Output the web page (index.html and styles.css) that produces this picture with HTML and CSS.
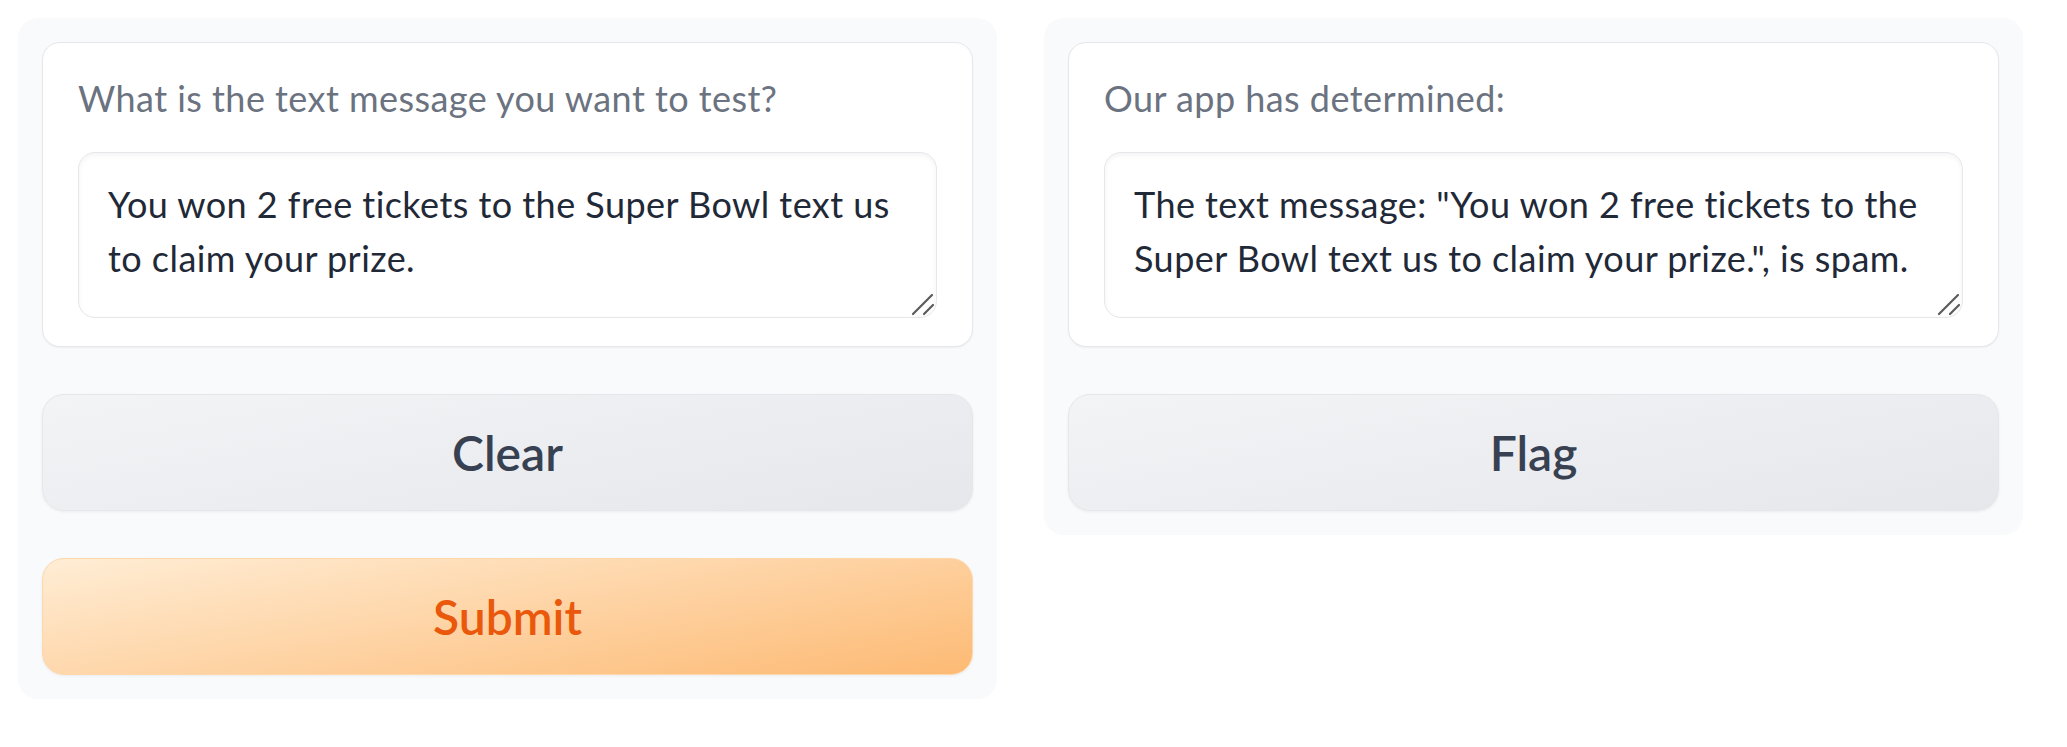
FILE: index.html
```html
<!DOCTYPE html>
<html lang="en">
<head>
<meta charset="utf-8">
<title>Spam detector</title>
<link rel="stylesheet" href="styles.css">
</head>
<body>
<div class="app">
  <div class="panel">
    <div class="card">
      <label class="label" for="msg">What is the text message you want to test?</label>
      <div class="field-wrap">
        <textarea id="msg" class="field">You won 2 free tickets to the Super Bowl text us to claim your prize.</textarea>
        <svg class="grip" width="26" height="26" viewBox="0 0 26 26" aria-hidden="true"><path d="M2 22L21 3M13 22L22 13" stroke="#5b5b5b" stroke-width="2.2" stroke-linecap="round" fill="none"/></svg>
      </div>
    </div>
    <button class="btn btn-secondary">Clear</button>
    <button class="btn btn-primary">Submit</button>
  </div>
  <div class="panel">
    <div class="card">
      <label class="label" for="out">Our app has determined:</label>
      <div class="field-wrap">
        <textarea id="out" class="field" readonly>The text message: "You won 2 free tickets to the Super Bowl text us to claim your prize.", is spam.</textarea>
        <svg class="grip" width="26" height="26" viewBox="0 0 26 26" aria-hidden="true"><path d="M2 22L21 3M13 22L22 13" stroke="#5b5b5b" stroke-width="2.2" stroke-linecap="round" fill="none"/></svg>
      </div>
    </div>
    <button class="btn btn-secondary">Flag</button>
  </div>
</div>
</body>
</html>
```

FILE: styles.css
```css
* { box-sizing: border-box; }

html, body {
  margin: 0;
  background: #ffffff;
}

body {
  font-family: Lato, "Open Sans", "Noto Sans", sans-serif;
}

.app {
  display: grid;
  grid-template-columns: 1fr 1fr;
  gap: 47px;
  padding: 18px 44px 0 18px;
  align-items: start;
}

.panel {
  background: #f9fafb;
  border-radius: 20px;
  padding: 24px;
  display: flex;
  flex-direction: column;
  gap: 47px;
}

.card {
  background: #ffffff;
  border: 1px solid #e5e7eb;
  border-radius: 18px;
  padding: 28px 35px 28px 35px;
  box-shadow: 0 1px 2px rgba(0, 0, 0, 0.05);
  display: flex;
  flex-direction: column;
  gap: 27px;
}

.label {
  display: block;
  color: #6b7280;
  font-size: 36px;
  line-height: 54px;
  letter-spacing: 0.45px;
}

.field-wrap {
  position: relative;
}

.field {
  display: block;
  width: 100%;
  height: 166px;
  margin: 0;
  padding: 24px 29px;
  border: 1px solid #e5e7eb;
  border-radius: 17px;
  background: #ffffff;
  color: #1f2937;
  font-family: inherit;
  font-size: 36px;
  line-height: 54px;
  letter-spacing: 0.45px;
  resize: none;
  outline: none;
  box-shadow: inset 0 2px 5px rgba(0, 0, 0, 0.05);
}

.grip {
  position: absolute;
  right: 0;
  bottom: 0;
  pointer-events: none;
}

.btn {
  display: flex;
  align-items: center;
  justify-content: center;
  height: 117px;
  width: 100%;
  border-radius: 22px;
  font-family: inherit;
  font-size: 48px;
  font-weight: 600;
  cursor: pointer;
  box-shadow: 0 1px 3px rgba(0, 0, 0, 0.06);
}

.btn-secondary {
  background: linear-gradient(170deg, #f3f4f6, #e5e7eb);
  border: 1px solid #e5e7eb;
  color: #374151;
}

.btn-primary {
  background: linear-gradient(170deg, #ffedd5, #fdba74);
  border: 1px solid #fed7aa;
  color: #ea580c;
}
```
